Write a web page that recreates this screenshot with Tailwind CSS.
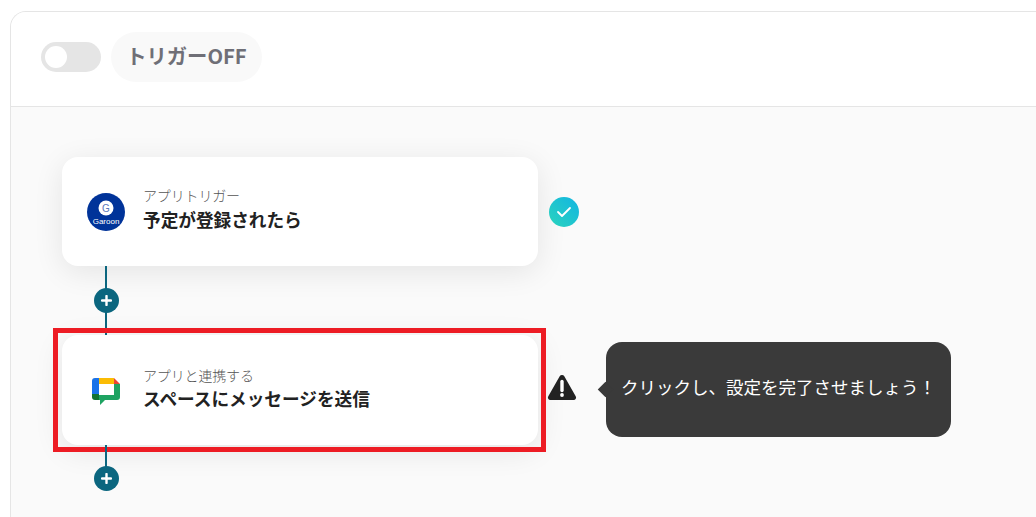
<!DOCTYPE html>
<html lang="ja">
<head>
  <meta charset="UTF-8" />
  <title>トリガー</title>
  <script src="https://cdn.jsdelivr.net/npm/@tailwindcss/browser@4"></script>
</head>
<body class="bg-white h-[517px] w-[1036px] overflow-hidden font-['Noto_Sans_CJK_JP','Noto_Sans',sans-serif]">
  <div class="pt-[11px] pl-[10px] h-full">
    <div class="h-full border-t border-l border-[#e5e5e5] rounded-tl-2xl overflow-hidden bg-[#fafafa]">

      <!-- ヘッダー -->
      <div class="h-[95px] bg-white border-b border-[#e5e5e5] flex items-start pt-5 pl-[30px] gap-[10px]">
        <div class="w-[60px] h-[30px] mt-[10px] rounded-full bg-[#e5e5e5] flex items-center pl-1">
          <div class="w-[22px] h-[22px] rounded-full bg-white"></div>
        </div>
        <div class="w-[151px] h-[50px] pb-[3px] rounded-full bg-[#f9f9f9] flex items-center justify-center text-[20.3px] font-bold text-[#6f6f77]">トリガーOFF</div>
      </div>

      <!-- フロー -->
      <div class="pt-[50px] pl-[51px]">
        <!-- カード1 -->
        <div class="flex items-center">
          <div class="w-[476px] h-[109px] bg-white rounded-2xl shadow-[0_6px_30px_rgba(0,0,0,0.09)] flex items-center pl-[25px] gap-[18px]">
            <svg class="w-[38px] h-[38px] mt-px" viewBox="0 0 38 38">
              <circle cx="19" cy="19" r="19" fill="#003399" />
              <circle cx="19" cy="15" r="7.5" fill="#fff" />
              <text x="19" y="18.5" text-anchor="middle" font-size="10" fill="#5a78bb" font-family="Liberation Sans">G</text>
              <text x="19" y="31" text-anchor="middle" font-size="8" fill="#fff" font-family="Liberation Sans">Garoon</text>
            </svg>
            <div class="pb-1">
              <p class="text-[14px] leading-[20px] font-light text-[#555555] tracking-[-0.15px]">アプリトリガー</p>
              <p class="text-[17.65px] leading-[29px] font-bold text-[#222222]">予定が登録されたら</p>
            </div>
          </div>
          <svg class="w-[30px] h-[30px] ml-[11px] mt-px" viewBox="0 0 30 30">
            <defs>
              <linearGradient id="chk" x1="0" y1="1" x2="1" y2="0">
                <stop offset="0" stop-color="#2bd4bd" />
                <stop offset="1" stop-color="#12b5e2" />
              </linearGradient>
            </defs>
            <circle cx="15" cy="15" r="15" fill="url(#chk)" />
            <path d="M9 15l4 4 8-8" fill="none" stroke="#fff" stroke-width="1.8" stroke-linecap="round" stroke-linejoin="round" />
          </svg>
        </div>

        <!-- コネクタ -->
        <div class="w-[476px] h-[69px] relative">
          <div class="absolute left-[43px] top-0 w-[2px] h-full bg-[#0b667f]"></div>
          <div class="absolute left-[31.5px] top-[22px] w-[25px] h-[25px] rounded-full bg-[#0b667f] flex items-center justify-center">
            <svg class="w-[11px] h-[11px]" viewBox="0 0 11 11"><path d="M5.5 1v9M1 5.5h9" stroke="#fff" stroke-width="2.4" stroke-linecap="round" /></svg>
          </div>
        </div>

        <!-- カード2 -->
        <div class="flex items-center relative">
          <div class="w-[476px] h-[110px] bg-white rounded-2xl shadow-[0_6px_30px_rgba(0,0,0,0.09)] flex items-center pl-[30px] gap-[23px]">
            <svg class="w-[28px] h-[27px] mt-[3px]" viewBox="0 0 28 27">
              <path d="M7 0h15v6H7z" fill="#fbbc04" />
              <path d="M3 0h4v16H0V3a3 3 0 0 1 3-3z" fill="#1a73e8" />
              <path d="M0 16h7v6H3a3 3 0 0 1-3-3z" fill="#137333" />
              <path d="M22 0l6 6h-6z" fill="#ea4335" />
              <path d="M22 6h6v13a3 3 0 0 1-3 3H13l-5 5v-5H7v-5h15z" fill="#1ea362" />
            </svg>
            <div class="pb-[3px]">
              <p class="text-[14px] leading-[20px] font-light text-[#555555] tracking-[-0.15px]">アプリと連携する</p>
              <p class="text-[17.65px] leading-[27px] font-bold text-[#222222]">スペースにメッセージを送信</p>
            </div>
          </div>

          <!-- 警告アイコン -->
          <svg class="w-[30px] h-[27px] ml-[9px] mb-[5px]" viewBox="0 1 30 26">
            <path d="M15 1.5a2.6 2.6 0 0 1 2.3 1.3l11.4 20a2.4 2.4 0 0 1-2.1 3.7H3.4a2.4 2.4 0 0 1-2.1-3.7l11.4-20A2.6 2.6 0 0 1 15 1.5z" fill="#222222" />
            <path d="M15 8v9" stroke="#fff" stroke-width="3.4" stroke-linecap="round" />
            <circle cx="15" cy="21.5" r="1.9" fill="#fff" />
          </svg>

          <!-- ツールチップ -->
          <div class="absolute left-[544px] top-[7px] w-[345px] h-[95px] pb-[5px] bg-[#3a3a3a] rounded-2xl flex items-center pl-[15px] text-[17.5px] text-white">
            <span class="absolute -left-[6px] top-[42px] w-[11px] h-[11px] bg-[#3a3a3a] rotate-45"></span>
            クリックし、設定を完了させましょう！
          </div>

          <!-- 赤枠 -->
          <div class="absolute -left-[9px] -top-[7px] w-[493px] h-[124px] border-[5px] border-[#ed1c24]"></div>
        </div>

        <!-- コネクタ -->
        <div class="w-[476px] h-[50px] relative">
          <div class="absolute left-[43px] top-0 w-[2px] h-[25px] bg-[#0b667f]"></div>
          <div class="absolute left-[31.5px] top-[21px] w-[25px] h-[25px] rounded-full bg-[#0b667f] flex items-center justify-center">
            <svg class="w-[11px] h-[11px]" viewBox="0 0 11 11"><path d="M5.5 1v9M1 5.5h9" stroke="#fff" stroke-width="2.4" stroke-linecap="round" /></svg>
          </div>
        </div>
      </div>
    </div>
  </div>
</body>
</html>
